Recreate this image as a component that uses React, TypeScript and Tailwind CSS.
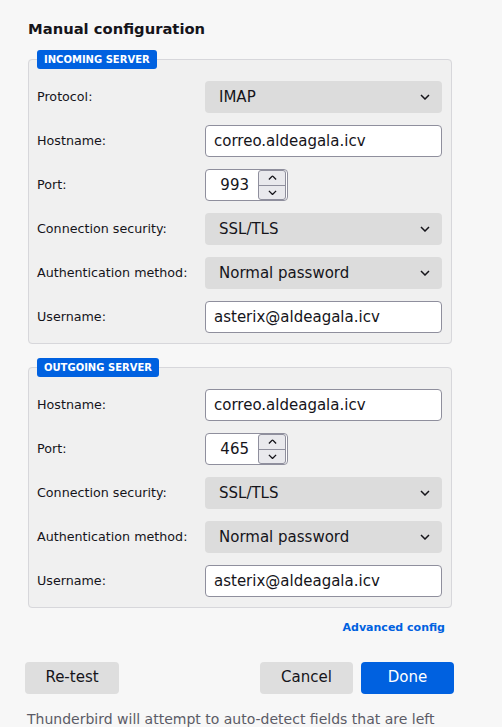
const font = { fontFamily: '"DejaVu Sans", sans-serif' };

function Chevron({ up = false, w = 10 }: { up?: boolean; w?: number }) {
  return (
    <svg width={w} height={w * 0.6} viewBox="0 0 10 6" className={up ? "rotate-180" : ""}>
      <path d="M1 1 L5 5 L9 1" fill="none" stroke="#15141a" strokeWidth="1.5" />
    </svg>
  );
}

function Select({ value }: { value: string }) {
  return (
    <div className="h-8 rounded-[4px] bg-[#dcdcdc] flex items-center justify-between pl-[14px] pr-[12px] text-[15px] text-[#15141a]">
      <span>{value}</span>
      <Chevron />
    </div>
  );
}

function TextInput({ value }: { value: string }) {
  return (
    <div className="h-8 rounded-[4px] bg-white border border-[#8f8f9d] flex items-center px-2 text-[15px] text-[#15141a]">
      {value}
    </div>
  );
}

function PortInput({ value }: { value: string }) {
  return (
    <div className="h-8 w-[83px] rounded-[4px] bg-white border border-[#8f8f9d] flex items-center text-[15px] text-[#15141a]">
      <span className="flex-1 text-right pr-[9px]">{value}</span>
      <div className="w-[28px] h-[30px] border border-[#8f8f9d] rounded-[3px] bg-[#e9e9ed] flex flex-col mr-[1px]">
        <div className="flex-1 flex items-center justify-center border-b border-[#8f8f9d]">
          <Chevron up w={9} />
        </div>
        <div className="flex-1 flex items-center justify-center">
          <Chevron w={9} />
        </div>
      </div>
    </div>
  );
}

type Row = { label: string; kind: "select" | "text" | "port"; value: string };

function ServerBox({ title, rows }: { title: string; rows: Row[] }) {
  return (
    <fieldset className="border border-[#d7d7db] rounded-[4px] bg-[#f0f0f0] pl-2 pr-[9px] pb-[10px] w-[424px]">
      <legend className="bg-[#0061e0] text-white text-[10px] font-bold rounded-[3px] px-[7px] h-[19px] leading-[19px]">
        {title}
      </legend>
      <div className="grid grid-cols-[168px_1fr] gap-y-3 pt-[12px]">
        {rows.map((r) => (
          <div key={r.label} className="contents">
            <div className="flex items-center text-[12.7px] text-[#15141a]">{r.label}</div>
            <div>
              {r.kind === "select" && <Select value={r.value} />}
              {r.kind === "text" && <TextInput value={r.value} />}
              {r.kind === "port" && <PortInput value={r.value} />}
            </div>
          </div>
        ))}
      </div>
    </fieldset>
  );
}

const incoming: Row[] = [
  { label: "Protocol:", kind: "select", value: "IMAP" },
  { label: "Hostname:", kind: "text", value: "correo.aldeagala.icv" },
  { label: "Port:", kind: "port", value: "993" },
  { label: "Connection security:", kind: "select", value: "SSL/TLS" },
  { label: "Authentication method:", kind: "select", value: "Normal password" },
  { label: "Username:", kind: "text", value: "asterix@aldeagala.icv" },
];

const outgoing: Row[] = [
  { label: "Hostname:", kind: "text", value: "correo.aldeagala.icv" },
  { label: "Port:", kind: "port", value: "465" },
  { label: "Connection security:", kind: "select", value: "SSL/TLS" },
  { label: "Authentication method:", kind: "select", value: "Normal password" },
  { label: "Username:", kind: "text", value: "asterix@aldeagala.icv" },
];

export default function App() {
  return (
    <div style={font} className="w-[502px] h-[727px] overflow-hidden bg-[#f7f7f7] text-[#15141a]">
      <div className="pl-[28px] pt-[19px]">
        <h1 className="text-[14.75px] font-bold leading-5">Manual configuration</h1>
        <div className="mt-[11px]">
          <ServerBox title="INCOMING SERVER" rows={incoming} />
        </div>
        <div className="mt-[14px]">
          <ServerBox title="OUTGOING SERVER" rows={outgoing} />
        </div>
        <div className="w-[417px] flex justify-end mt-[12px]">
          <span className="text-[11px] font-bold text-[#0061e0]">Advanced config</span>
        </div>
      </div>
      <div className="flex items-center pl-[25px] mt-[25px] w-[454px]">
        <button className="h-8 w-[94px] rounded-[4px] bg-[#dedede] text-[15px] text-[#15141a]">Re-test</button>
        <div className="flex-1" />
        <button className="h-8 w-[93px] rounded-[4px] bg-[#dedede] text-[15px] text-[#15141a]">Cancel</button>
        <button className="h-8 w-[93px] ml-2 rounded-[4px] bg-[#0061e0] text-[15px] text-white">Done</button>
      </div>
      <p className="pl-[27px] mt-[15px] text-[14px] text-[#5b5b66] whitespace-nowrap">
        Thunderbird will attempt to auto-detect fields that are left
      </p>
    </div>
  );
}
